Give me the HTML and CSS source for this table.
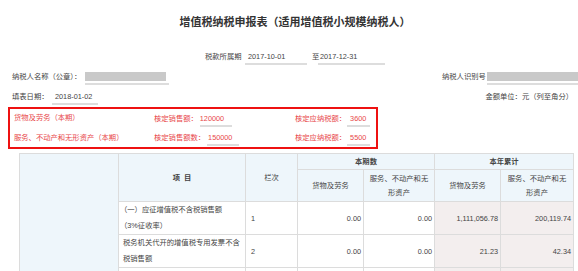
FILE: index.html
```html
<!DOCTYPE html>
<html lang="zh-CN">
<head>
<meta charset="utf-8">
<link rel="stylesheet" href="styles.css">
</head>
<body>
<div class="page">
  <h1 class="title">增值税纳税申报表（适用增值税小规模纳税人）</h1>

  <div class="period">
    <span class="lbl">税款所属期</span>
    <span class="field date1">2017-10-01</span>
    <span class="to">至</span>
    <span class="field date2">2017-12-31</span>
  </div>

  <div class="info-row row-name">
    <div class="info-left">
      <span class="lbl">纳税人名称（公章）：</span>
      <span class="field masked name-field"><span class="mask name-mask"></span></span>
    </div>
    <div class="info-right">
      <span class="lbl">纳税人识别号</span>
      <span class="field masked id-field"><span class="mask id-mask"></span></span>
    </div>
  </div>

  <div class="info-row row-date">
    <div class="info-left">
      <span class="lbl">填表日期：</span>
      <span class="field fill-date">2018-01-02</span>
    </div>
    <div class="unit">金额单位：元（列至角分）</div>
  </div>

  <div class="verify">
    <div class="v-row">
      <span class="v-lbl">货物及劳务（本期）</span>
      <span class="v-cell"><span class="lbl">核定销售额：</span><span class="field v-field w1">120000</span></span>
      <span class="v-cell"><span class="lbl">核定应纳税额：</span><span class="field v-field w3">3600</span></span>
    </div>
    <div class="v-row">
      <span class="v-lbl">服务、不动产和无形资产（本期）</span>
      <span class="v-cell"><span class="lbl">核定销售额数：</span><span class="field v-field w2">150000</span></span>
      <span class="v-cell"><span class="lbl">核定应纳税额：</span><span class="field v-field w3">5500</span></span>
    </div>
  </div>

  <table class="report">
    <colgroup>
      <col class="c0"><col class="c1"><col class="c2"><col class="c3"><col class="c4"><col class="c5"><col class="c6">
    </colgroup>
    <tbody>
      <tr class="h1">
        <th class="side" rowspan="5"></th>
        <th class="item-h" rowspan="2">项&nbsp;&nbsp;目</th>
        <th class="no-h" rowspan="2">栏次</th>
        <th class="grp" colspan="2">本期数</th>
        <th class="grp" colspan="2">本年累计</th>
      </tr>
      <tr class="h2">
        <th class="sub">货物及劳务</th>
        <th class="sub">服务、不动产和无<br>形资产</th>
        <th class="sub">货物及劳务</th>
        <th class="sub">服务、不动产和无<br>形资产</th>
      </tr>
      <tr class="r1">
        <td class="item">（一）应征增值税不含税销售额<br>（3%征收率）</td>
        <td class="no">1</td>
        <td class="num">0.00</td>
        <td class="num">0.00</td>
        <td class="num acc">1,111,056.78</td>
        <td class="num acc">200,119.74</td>
      </tr>
      <tr class="r2">
        <td class="item item2">税务机关代开的增值税专用发票不含<br>税销售额</td>
        <td class="no">2</td>
        <td class="num">0.00</td>
        <td class="num">0.00</td>
        <td class="num acc">21.23</td>
        <td class="num acc">42.34</td>
      </tr>
      <tr class="r3">
        <td class="item item2"></td>
        <td class="no"></td>
        <td class="num"></td>
        <td class="num"></td>
        <td class="num acc"></td>
        <td class="num acc"></td>
      </tr>
    </tbody>
  </table>
</div>
</body>
</html>
```

FILE: styles.css
```css
html, body {
  margin: 0;
  padding: 0;
  background: #ffffff;
  overflow: hidden;
}

.page {
  width: 578px;
  height: 271px;
  overflow: hidden;
  font-family: "Liberation Sans", "Noto Sans CJK SC", sans-serif;
  font-size: 7.3px;
  color: #444444;
}

.title {
  margin: 14px 0 0 0;
  padding-left: 12px;
  height: 14px;
  line-height: 14px;
  font-size: 11px;
  font-weight: bold;
  color: #333333;
  text-align: center;
  font-family: "Noto Sans CJK SC", sans-serif;
}

.field {
  display: inline-block;
  box-sizing: border-box;
  line-height: 10px;
  height: 13px;
  padding-bottom: 1px;
  border-bottom: 2px solid #dddddd;
}

.period {
  display: flex;
  align-items: flex-start;
  margin-top: 24px;
  height: 13px;
  padding-left: 205px;
  line-height: 10px;
}

.period .lbl { width: 38px; }
.date1 { margin-left: 2px; width: 62px; padding-left: 3px; }
.to { margin-left: 5px; width: 6px; }
.date2 { margin-left: 0; width: 67px; padding-left: 2px; }

.info-row {
  display: flex;
  align-items: flex-start;
  line-height: 10px;
  height: 13px;
}

.row-name { margin-top: 7px; }
.row-date { margin-top: 7px; }

.info-left {
  display: flex;
  align-items: flex-start;
  flex-shrink: 0;
  padding-left: 12px;
  width: 430px;
}

.info-right {
  display: flex;
  align-items: flex-start;
  flex-shrink: 0;
}

.info-right .lbl { width: 45px; }

.masked {
  display: inline-flex;
  align-items: flex-start;
}

.mask {
  display: block;
  height: 9px;
  background: #c9c9c9;
}

.name-field { margin-left: 4px; width: 84px; }
.name-mask { width: 81px; }
.id-field { width: 100px; }
.id-mask { width: 100px; }

.row-date .info-left .lbl { width: 37px; }
.fill-date { margin-left: 3px; width: 46px; padding-left: 3px; }

.unit {
  margin-left: auto;
  padding-right: 5px;
}

.verify {
  box-sizing: border-box;
  margin: 2px 0 0 8px;
  width: 370px;
  height: 42px;
  border: 2px solid #ee1111;
  padding: 1px 0 0 4px;
  color: #e8474a;
  display: flex;
  flex-direction: column;
  gap: 2px;
}

.v-row {
  display: grid;
  grid-template-columns: 140px 141px auto;
  height: 18px;
  align-items: center;
  line-height: 10px;
}

.v-cell {
  display: flex;
  align-items: flex-start;
  padding-top: 3px;
}

.v-lbl { padding-bottom: 1px; }

.v-field { margin-left: 2px; color: #e8474a; }
.w1 { width: 32px; padding-left: 0; }
.w2 { width: 32px; padding-left: 1px; }
.w3 { width: 23px; padding-left: 3px; margin-left: 1px; }

.report {
  margin: 4px 0 0 19px;
  border-collapse: collapse;
  table-layout: fixed;
  width: 554px;
  font-size: 7.3px;
  color: #444444;
}

.c0 { width: 99px; }
.c1 { width: 127px; }
.c2 { width: 52px; }
.c3 { width: 66px; }
.c4 { width: 71px; }
.c5 { width: 66px; }
.c6 { width: 73px; }

.report th, .report td {
  border: 1px solid #dcdcdc;
  padding: 0 3px;
  line-height: 15px;
}

.report th {
  background: #eef6fb;
  font-weight: normal;
  text-align: center;
}

.report .side { background: #eef6fb; }

.h1 { height: 16px; }
.h1 th { line-height: 13px; }
.h2 { height: 32px; }
.h2 th { line-height: 14px; }

.report .grp { font-weight: bold; }
.report .item-h { font-weight: bold; }

.r1 { height: 32px; }
.r2 { height: 31px; }
.r3 { height: 31px; }

.report td { background: #ffffff; }
.report td.item { padding-left: 1px; padding-right: 0; line-height: 16px; }
.report td.item2 { padding-left: 4px; }
.report td.no { padding-left: 5px; }
.report td.num { text-align: right; padding-right: 2px; }
.report td.acc { background: #f3eeee; }
```
